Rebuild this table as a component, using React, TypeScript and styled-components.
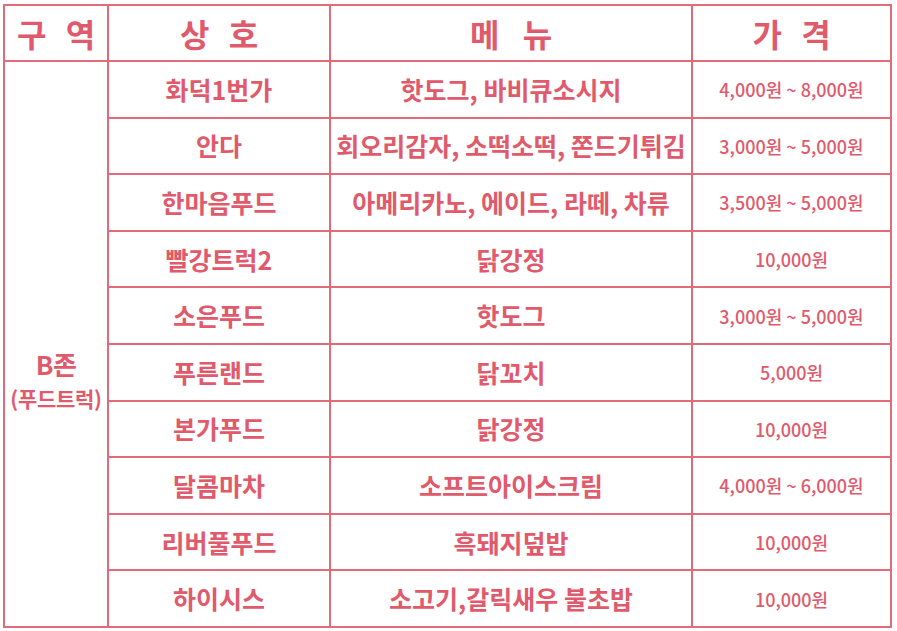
import { FC } from "react"
import styled, { createGlobalStyle } from "styled-components"

const GlobalStyle = createGlobalStyle`
  html, body {
    margin: 0;
    padding: 0;
    background: #ffffff;
  }
  body {
    font-family: "Noto Sans CJK KR", "Noto Sans", sans-serif;
  }
`

const LINE = "#e36a78"
const INK = "#e05a6b"

const Page = styled.div`
  padding: 4px 0 0 3px;
`

const Table = styled.table`
  border-collapse: separate;
  border-spacing: 0;
  table-layout: fixed;
  width: 889px;
  border-top: 2px solid ${LINE};
  border-left: 2px solid ${LINE};
  color: ${INK};
`

const Col = styled.col<{ $w: number }>`
  width: ${(p) => p.$w}px;
`

const HeadCell = styled.th<{ $spacing?: number }>`
  height: 54px;
  padding: 0;
  border-right: 2px solid ${LINE};
  border-bottom: 2px solid ${LINE};
  font-size: 32px;
  font-weight: 700;
  line-height: 1;
  text-align: center;
  vertical-align: middle;
  white-space: pre;
  letter-spacing: ${(p) => p.$spacing ?? 6}px;
  text-indent: ${(p) => p.$spacing ?? 6}px;
`

const Cell = styled.td<{ $small?: boolean }>`
  height: 54.6px;
  padding: 0;
  border-right: 2px solid ${LINE};
  border-bottom: 2px solid ${LINE};
  font-size: ${(p) => (p.$small ? 18 : 25)}px;
  font-weight: ${(p) => (p.$small ? 500 : 700)};
  line-height: 1;
  text-align: center;
  vertical-align: middle;
  white-space: nowrap;
`

const ZoneCell = styled.td`
  padding: 70px 0 0;
  border-right: 2px solid ${LINE};
  border-bottom: 2px solid ${LINE};
  text-align: center;
  vertical-align: middle;
`

const ZoneName = styled.div`
  font-size: 26px;
  font-weight: 700;
  line-height: 1.45;
  letter-spacing: -0.5px;
`

const ZoneSub = styled.div`
  font-size: 21px;
  font-weight: 700;
  line-height: 1.45;
  letter-spacing: -0.3px;
`

type Stall = {
  name: string
  menu: string
  price: string
}

const stalls: Stall[] = [
  { name: "화덕1번가", menu: "핫도그, 바비큐소시지", price: "4,000원 ~ 8,000원" },
  { name: "안다", menu: "회오리감자, 소떡소떡, 쫀드기튀김", price: "3,000원 ~ 5,000원" },
  { name: "한마음푸드", menu: "아메리카노, 에이드, 라떼, 차류", price: "3,500원 ~ 5,000원" },
  { name: "빨강트럭2", menu: "닭강정", price: "10,000원" },
  { name: "소은푸드", menu: "핫도그", price: "3,000원 ~ 5,000원" },
  { name: "푸른랜드", menu: "닭꼬치", price: "5,000원" },
  { name: "본가푸드", menu: "닭강정", price: "10,000원" },
  { name: "달콤마차", menu: "소프트아이스크림", price: "4,000원 ~ 6,000원" },
  { name: "리버풀푸드", menu: "흑돼지덮밥", price: "10,000원" },
  { name: "하이시스", menu: "소고기,갈릭새우 불초밥", price: "10,000원" },
]

const App: FC = () => {
  return (
    <Page>
      <GlobalStyle />
      <Table>
        <colgroup>
          <Col $w={104} />
          <Col $w={222} />
          <Col $w={362} />
          <Col $w={199} />
        </colgroup>
        <thead>
          <tr>
            <HeadCell>구 역</HeadCell>
            <HeadCell>상 호</HeadCell>
            <HeadCell $spacing={8}>메 뉴</HeadCell>
            <HeadCell>가 격</HeadCell>
          </tr>
        </thead>
        <tbody>
          {stalls.map((s, i) => (
            <tr key={s.name}>
              {i === 0 && (
                <ZoneCell rowSpan={stalls.length}>
                  <ZoneName>B존</ZoneName>
                  <ZoneSub>(푸드트럭)</ZoneSub>
                </ZoneCell>
              )}
              <Cell>{s.name}</Cell>
              <Cell>{s.menu}</Cell>
              <Cell $small>{s.price}</Cell>
            </tr>
          ))}
        </tbody>
      </Table>
    </Page>
  )
}

export default App
